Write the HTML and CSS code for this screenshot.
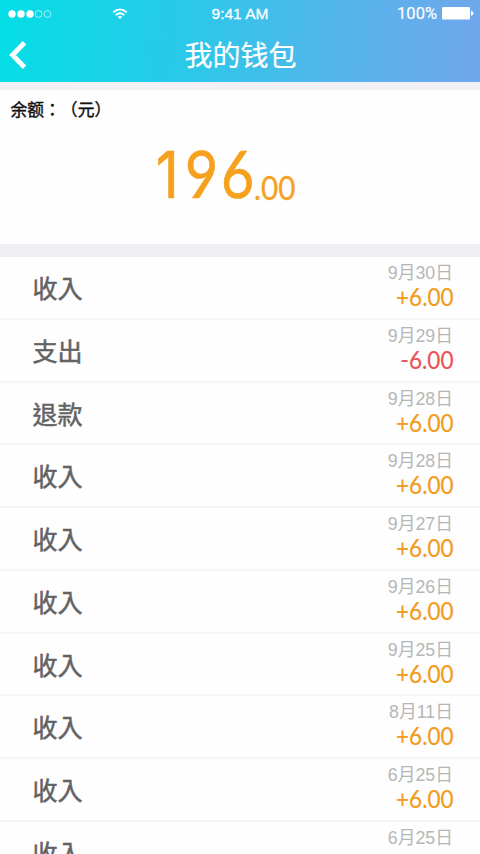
FILE: index.html
```
<!DOCTYPE html>
<html lang="zh-CN">
<head>
<meta charset="utf-8">
<title>我的钱包</title>
<link rel="stylesheet" href="styles.css">
</head>
<body>
<main class="screen">
  <header class="header">
    <div class="status">
      <div class="network">
        <svg width="44" height="10" viewBox="0 0 44 10"><g fill="#fff"><circle cx="4" cy="5" r="3.7"/><circle cx="13" cy="5" r="3.7"/><circle cx="22" cy="5" r="3.7"/></g><g fill="none" stroke="#fff" stroke-opacity=".75" stroke-width=".8"><circle cx="30.7" cy="5" r="3.4"/><circle cx="39.5" cy="5" r="3.4"/></g></svg>
        <svg class="wifi" width="16" height="12" viewBox="0 0 18 13" fill="none" stroke="#fff" stroke-width="2"><path d="M1.3 4.7Q9 -2 16.7 4.7M4 7.8Q9 3.4 14 7.8"/><path d="M6.3 9.7Q9 7.6 11.7 9.7L9 12.2Z" fill="#fff" stroke="none"/></svg>
      </div>
      <span class="time">9:41 AM</span>
      <div class="power"><span>100%</span>
        <svg width="32" height="13" viewBox="0 0 32 13" fill="#fff"><rect width="28" height="12.5" rx="1.2"/><path d="M29 3.5Q31.5 4.5 31.5 6.3T29 9Z"/></svg>
      </div>
    </div>
    <div class="nav">
      <svg class="back" width="18" height="28" viewBox="0 0 18 28" fill="none" stroke="#fff" stroke-width="4.8"><path d="M15.5 1.7L3.5 14L15.5 26.3"/></svg>
      <h1>我的钱包</h1>
    </div>
  </header>
  <section class="balance">
    <h2 lang="zh-TW">余额：（元）</h2>
    <div class="total"><span class="whole"><i class="one">1</i><i>9</i><i>6</i></span><span class="cents">.00</span></div>
  </section>
  <ul class="records" lang="zh-TW">
    <li><span class="kind">收入</span><div class="detail"><time>9月30日</time><b>+6.00</b></div></li>
    <li><span class="kind">支出</span><div class="detail"><time>9月29日</time><b class="out">-6.00</b></div></li>
    <li><span class="kind">退款</span><div class="detail"><time>9月28日</time><b>+6.00</b></div></li>
    <li><span class="kind">收入</span><div class="detail"><time>9月28日</time><b>+6.00</b></div></li>
    <li><span class="kind">收入</span><div class="detail"><time>9月27日</time><b>+6.00</b></div></li>
    <li><span class="kind">收入</span><div class="detail"><time>9月26日</time><b>+6.00</b></div></li>
    <li><span class="kind">收入</span><div class="detail"><time>9月25日</time><b>+6.00</b></div></li>
    <li><span class="kind">收入</span><div class="detail"><time>8月11日</time><b>+6.00</b></div></li>
    <li><span class="kind">收入</span><div class="detail"><time>6月25日</time><b>+6.00</b></div></li>
    <li><span class="kind">收入</span><div class="detail"><time>6月25日</time></div></li>
  </ul>
</main>
</body>
</html>
```
FILE: styles.css
```
* { box-sizing: border-box; margin: 0; padding: 0; }
body { font-family: "Liberation Sans", "Noto Sans CJK SC", sans-serif; background: #fefefe; }
.screen { height: 854px; overflow: hidden; }
svg { display: block; }
.header { height: 82px; color: #fff; background: linear-gradient(93deg, #06dde6 2%, #27cae9 36%, #56b4eb 72%, #70a7ec 100%); }
.status { height: 27px; display: grid; grid-template-columns: 1fr auto 1fr; align-items: center; padding: 0 6px 0 8px; }
.network { display: flex; align-items: center; gap: 60px; }
.time { font: 400 15.5px/27px "Liberation Sans", sans-serif; -webkit-text-stroke: .3px #fff; margin-left: -2px; }
.power { display: flex; justify-content: flex-end; align-items: center; gap: 5px; font: 400 16.5px/27px Roboto, sans-serif; -webkit-text-stroke: .2px #fff; }
.nav { height: 55px; display: grid; grid-template-columns: 40px 1fr 40px; align-items: center; }
.back { margin-left: 9px; }
h1 { font: 400 28px/55px "Noto Sans CJK SC", sans-serif; text-align: center; padding-left: 1px; -webkit-text-stroke: .2px #fff; }
.balance { height: 175px; padding-top: 9px; border-top: 8px solid #f1f0f5; border-bottom: 13px solid #efeff4; }
h2 { font: 400 16.8px/20px "Noto Sans CJK TC", sans-serif; text-spacing-trim: space-all; -webkit-text-stroke: .4px #111; color: #111; padding-left: 10.5px; }
.total { display: flex; align-items: baseline; color: #f5a11e; font-family: Lato, sans-serif; padding: 11px 0 0 154px; line-height: 86px; }
.whole { display: flex; align-items: baseline; font-size: 65px; width: 100px; -webkit-text-stroke: .7px; }
i { font-style: normal; width: 36px; transform: translateX(3px) scaleX(.88); transform-origin: left; }
.one { font-family: Inter, sans-serif; width: 29px; transform: translateX(2px) scaleX(.86); }
.cents { font-size: 33px; transform: translateY(2px) scaleX(.9); transform-origin: left; -webkit-text-stroke: .3px; }
.records { list-style: none; }
.records li { height: 62.75px; display: flex; justify-content: space-between; padding: 0 27px 0 32.5px; border-bottom: 2px solid #f5f5f9; }
.kind { font: 400 25px/61px "Noto Sans CJK TC", sans-serif; color: #626262; -webkit-text-stroke: .5px #626262; }
.detail { display: flex; flex-direction: column; align-items: flex-end; padding-top: 6px; }
time { font-size: 17.8px; line-height: 20px; color: #b6b6b6; }
b { font: 400 24.5px/27px Lato, sans-serif; color: #f29b1c; transform: translateX(1px) scaleX(.92); transform-origin: right; -webkit-text-stroke: .2px; }
.out { color: #ea5358; }
```
